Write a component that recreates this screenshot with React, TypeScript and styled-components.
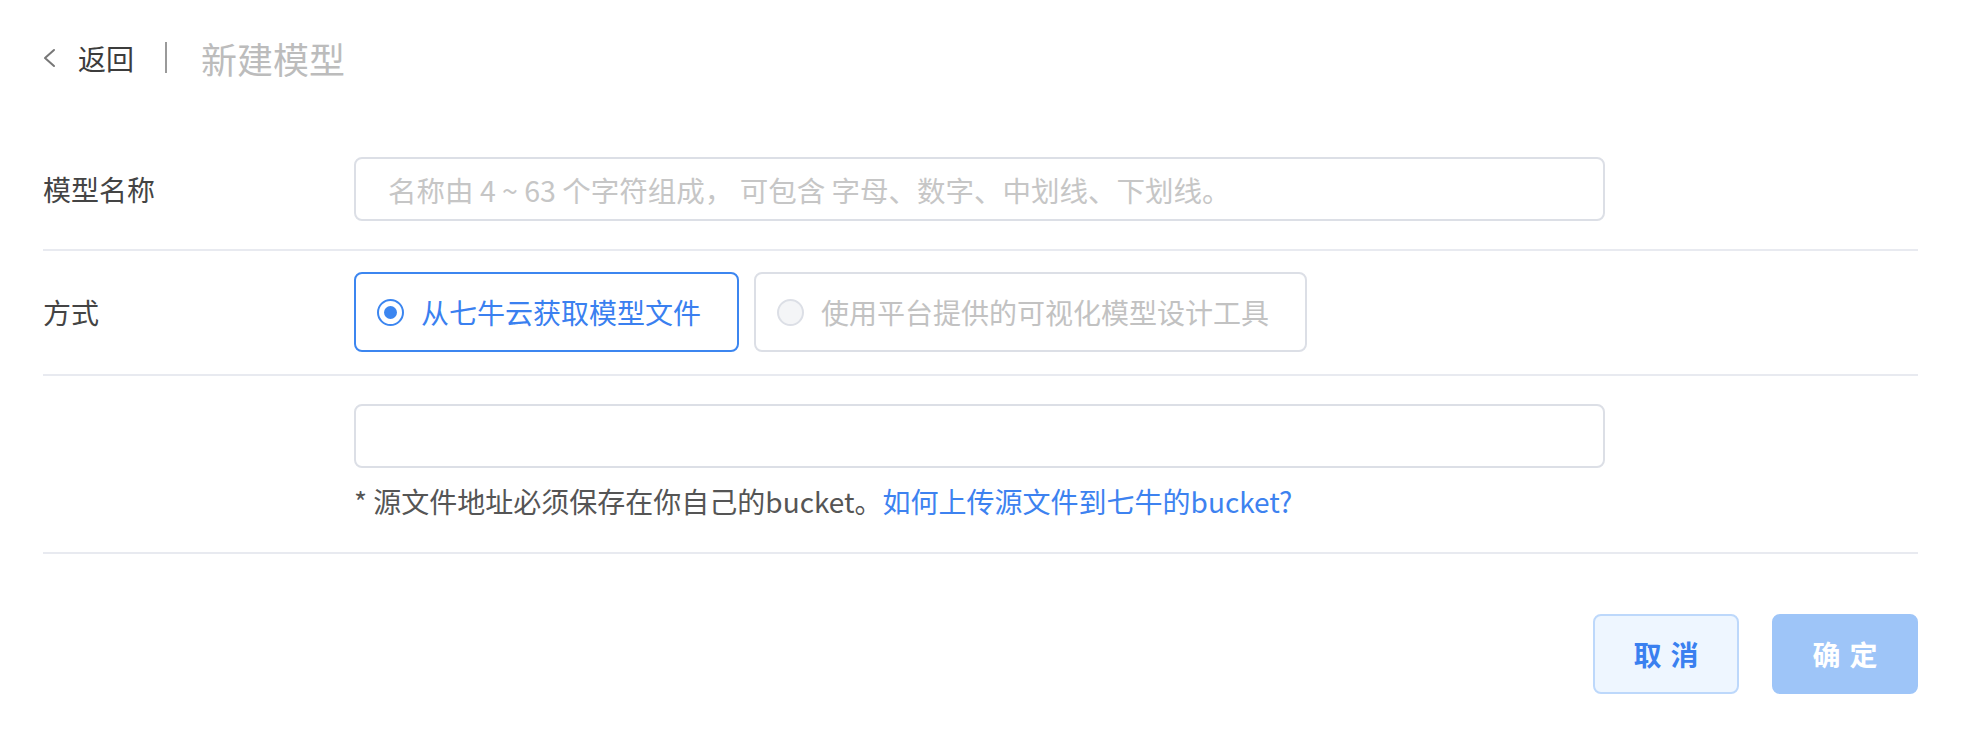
import styled, { createGlobalStyle } from "styled-components";

const GlobalStyle = createGlobalStyle`
  * { box-sizing: border-box; }
  body {
    margin: 0;
    background: #ffffff;
    font-family: "Noto Sans CJK SC", "Noto Sans", sans-serif;
    color: #444;
  }
`;

const Page = styled.div`
  padding: 0 50px 0 43px;
`;

const Header = styled.div`
  display: flex;
  align-items: center;
  height: 117px;
  padding-bottom: 2px;
`;

const BackLink = styled.a`
  display: flex;
  align-items: center;
  gap: 22px;
  font-size: 28px;
  color: #3c3c3c;
  cursor: pointer;
  text-decoration: none;
`;

const Separator = styled.span`
  width: 2px;
  height: 31px;
  background: #9a9a9a;
  margin: 0 34px 0 31px;
`;

const Title = styled.h1`
  margin: 0;
  font-size: 36px;
  font-weight: 400;
  color: #bcbcbc;
`;

const Row = styled.div<{ $pad: string }>`
  display: grid;
  grid-template-columns: 311px 1fr;
  align-items: start;
  padding: ${(p) => p.$pad};
  border-bottom: 2px solid #e8eaf0;
`;

const Label = styled.div<{ $h: number }>`
  height: ${(p) => p.$h}px;
  display: flex;
  align-items: center;
  font-size: 28px;
  color: #444;
`;

const TextInput = styled.input`
  display: block;
  width: 1251px;
  height: 64px;
  padding: 0 32px;
  border: 2px solid #dcdfe6;
  border-radius: 8px;
  font-family: inherit;
  font-size: 28.5px;
  color: #444;
  outline: none;
  background: #fff;

  &::placeholder {
    color: #c6c6c6;
  }
`;

const Options = styled.div`
  display: flex;
  gap: 15px;
`;

const OptionCard = styled.label<{ $active?: boolean }>`
  display: flex;
  align-items: center;
  gap: 17px;
  height: 80px;
  padding: 0 36px 0 21px;
  border: 2px solid ${(p) => (p.$active ? "#3c86f0" : "#dcdfe6")};
  border-radius: 8px;
  font-size: 28px;
  color: ${(p) => (p.$active ? "#3a80f0" : "#c2c2c2")};
  cursor: pointer;
`;

const RadioDot = styled.span<{ $active?: boolean }>`
  position: relative;
  width: 27px;
  height: 27px;
  flex-shrink: 0;
  border-radius: 50%;
  border: 2px solid ${(p) => (p.$active ? "#3c86f0" : "#dcdfe6")};
  background: ${(p) => (p.$active ? "#fff" : "#f4f5f7")};

  &::after {
    content: "";
    display: ${(p) => (p.$active ? "block" : "none")};
    position: absolute;
    inset: 5px;
    border-radius: 50%;
    background: #3c86f0;
  }
`;

const Field = styled.div`
  display: flex;
  flex-direction: column;
  gap: 13px;
`;

const Hint = styled.p`
  margin: 0;
  font-size: 28px;
  line-height: 40px;
  color: #555;
`;

const HintLink = styled.a`
  color: #3d82f0;
  text-decoration: none;
  cursor: pointer;
`;

const Footer = styled.div`
  display: flex;
  justify-content: flex-end;
  gap: 33px;
  padding-top: 60px;
`;

const Button = styled.button<{ $primary?: boolean }>`
  width: 146px;
  height: 80px;
  border-radius: 8px;
  border: 2px solid ${(p) => (p.$primary ? "#9ec5f8" : "#bdd8fb")};
  background: ${(p) => (p.$primary ? "#9ec5f8" : "#eef6ff")};
  color: ${(p) => (p.$primary ? "#ffffff" : "#3a80f0")};
  font-family: inherit;
  font-size: 28px;
  font-weight: 700;
  letter-spacing: 9px;
  text-indent: 9px;
  cursor: pointer;
`;

const BackIcon = () => (
  <svg width="13" height="20" viewBox="0 0 13 20" fill="none">
    <polyline
      points="11,2 2,10 11,18"
      stroke="#777"
      strokeWidth="2"
      strokeLinecap="round"
      strokeLinejoin="round"
    />
  </svg>
);

export default function App() {
  return (
    <>
      <GlobalStyle />
      <Page>
        <Header>
          <BackLink>
            <BackIcon />
            返回
          </BackLink>
          <Separator />
          <Title>新建模型</Title>
        </Header>

        <Row $pad="40px 0 28px">
          <Label $h={64}>模型名称</Label>
          <TextInput placeholder="名称由 4 ~ 63 个字符组成， 可包含 字母、数字、中划线、下划线。" />
        </Row>

        <Row $pad="21px 0 22px">
          <Label $h={80}>方式</Label>
          <Options>
            <OptionCard $active>
              <RadioDot $active />
              从七牛云获取模型文件
            </OptionCard>
            <OptionCard>
              <RadioDot />
              使用平台提供的可视化模型设计工具
            </OptionCard>
          </Options>
        </Row>

        <Row $pad="28px 0 31px">
          <div />
          <Field>
            <TextInput />
            <Hint>
              * 源文件地址必须保存在你自己的bucket。
              <HintLink>如何上传源文件到七牛的bucket?</HintLink>
            </Hint>
          </Field>
        </Row>

        <Footer>
          <Button>取消</Button>
          <Button $primary>确定</Button>
        </Footer>
      </Page>
    </>
  );
}
